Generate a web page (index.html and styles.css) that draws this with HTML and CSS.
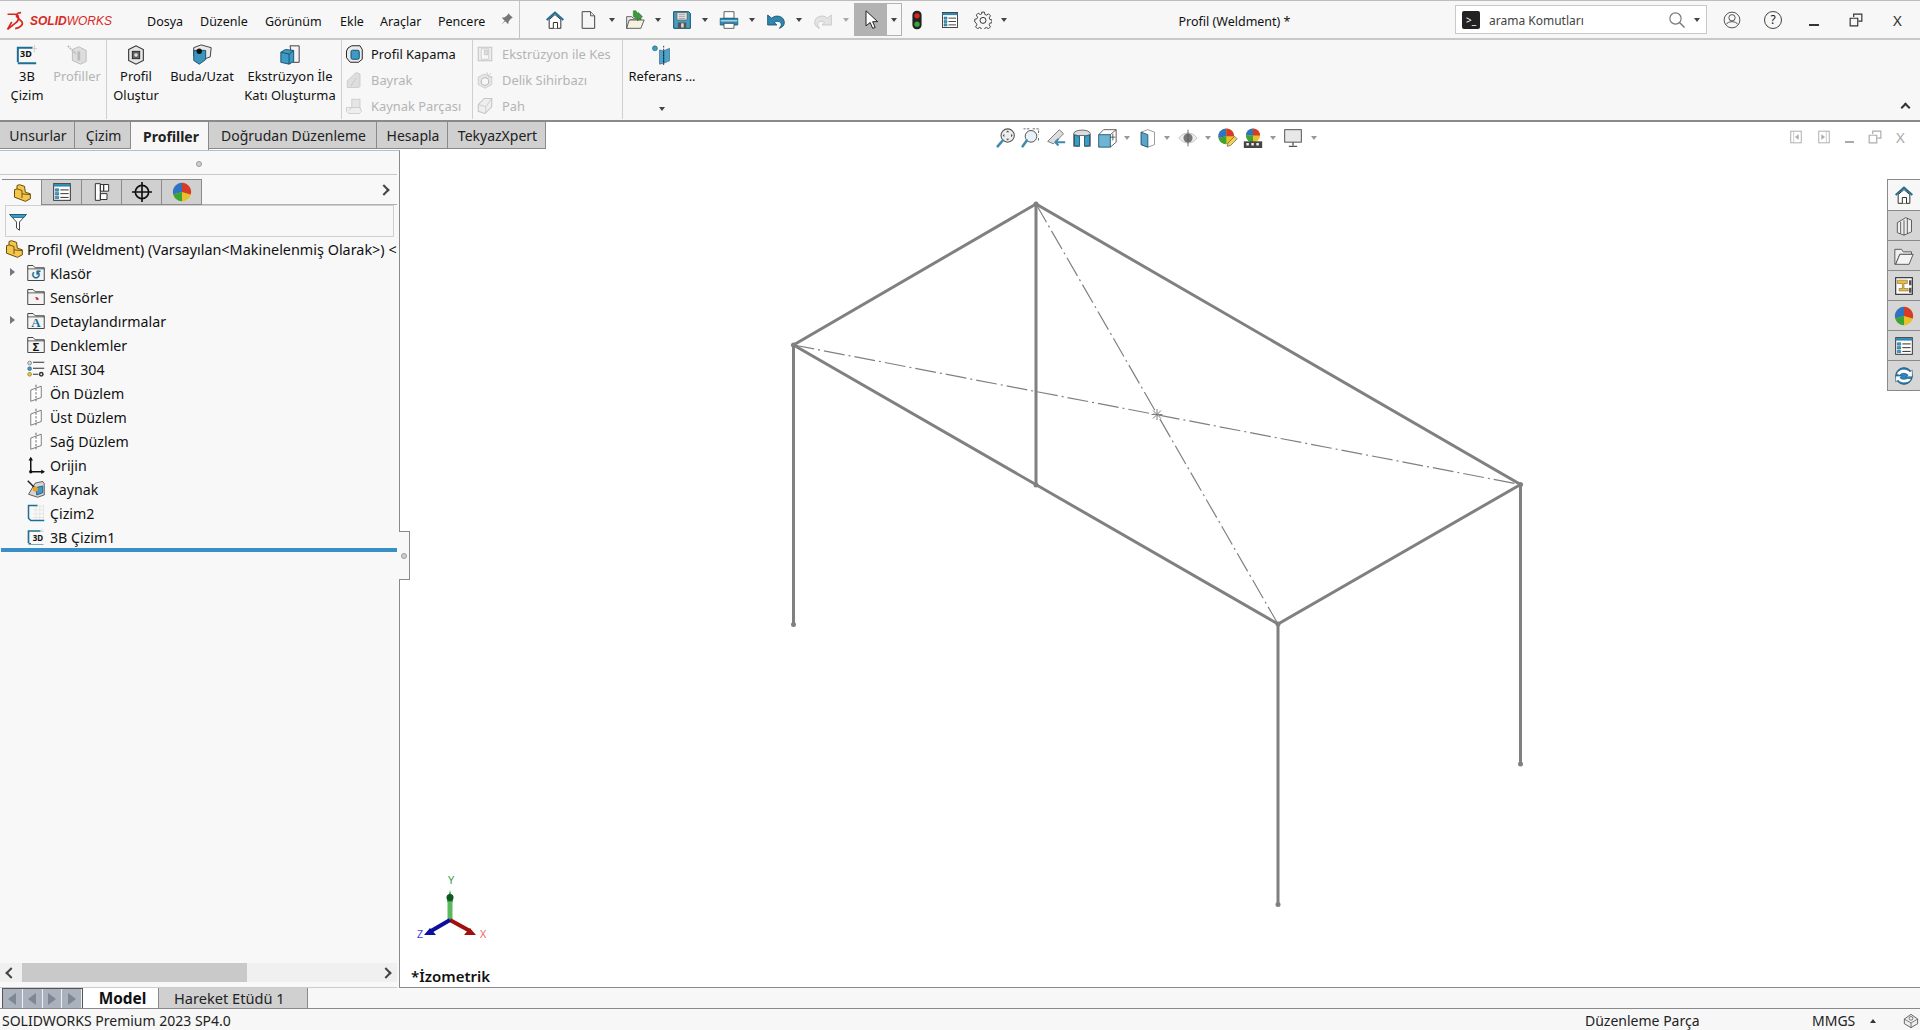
FILE: index.html
```html
<!DOCTYPE html>
<html lang="tr">
<head>
<meta charset="utf-8">
<title>SOLIDWORKS</title>
<link rel="stylesheet" href="styles.css">
</head>
<body>
<svg class="defs" aria-hidden="true">
<defs>
<symbol id="home" viewBox="0 0 24 24"><path d="M2 12 12 3l10 9" fill="none" stroke="#1d6f96" stroke-width="2.4"/><path d="M5 11.5 12 5.500l7 6V22H5z" fill="#fff" stroke="#333" stroke-width="1.200"/><path d="M10 22v-7h5v7" fill="#fff" stroke="#333" stroke-width="1.200"/></symbol>
<symbol id="new" viewBox="0 0 24 24"><path d="M5 2h10l5 5v15H5z" fill="#f5f5f5" stroke="#444" stroke-width="1.200"/><path d="M15 2v5h5" fill="#ddd" stroke="#444"/></symbol>
<symbol id="open" viewBox="0 0 24 24"><path d="M2 8h6l2 2h9v2H6L3 22H2z" fill="#eee" stroke="#444"/><path d="M5 12h18l-4 10H2z" fill="#f7f2e0" stroke="#444"/><path d="M10 1h3l3 4V3l5 5-6 5v-3l-5-2z" fill="#3c9a3c" stroke="#1b6b1b" stroke-width=".6"/></symbol>
<symbol id="save" viewBox="0 0 24 24"><path d="M2 2h18l2 2v18H2z" fill="#4b9bbf" stroke="#12506e" stroke-width="1.200"/><path d="M6 3h12v9H6z" fill="#eee" stroke="#555" stroke-width=".8"/><path d="M8 5h8M8 7.500h8M8 10h8" stroke="#888"/><path d="M7 15h10v7H7z" fill="#555"/><path d="M11 16h3v5h-3z" fill="#ddd"/></symbol>
<symbol id="print" viewBox="0 0 24 24"><path d="M6 2h12v8H6z" fill="#fff" stroke="#444"/><path d="M1.500 10h21v8h-21z" fill="#2e8bb5" stroke="#135a7a"/><path d="M2 13h20" stroke="#bfe2f0" stroke-width="1.500"/><path d="M6 16h12v6H6z" fill="#fff" stroke="#444"/></symbol>
<symbol id="undo" viewBox="0 0 24 24"><path d="M7 10c4-5 15-3 15 5 0 4-3 6-6 7 2-2 3-4 2-6-1-3-6-3-8-1l3 3H2V6z" fill="#2f86b0" stroke="#124f6c" stroke-width="1"/></symbol>
<symbol id="redo" viewBox="0 0 24 24"><path d="M17 10c-4-5-15-3-15 5 0 4 3 6 6 7-2-2-3-4-2-6 1-3 6-3 8-1l-3 3h11V6z" fill="#e4e4e4" stroke="#c4c4c4" stroke-width="1"/></symbol>
<symbol id="cursor" viewBox="0 0 24 24"><path d="M6 1v18l5-4 3 7 3-1-3-7h6z" fill="#fff" stroke="#222" stroke-width="1.200"/></symbol>
<symbol id="traffic" viewBox="0 0 24 24"><rect x="6.500" y="1" width="11" height="22" rx="5" fill="#222"/><circle cx="12" cy="7" r="3.200" fill="#d8261c"/><circle cx="12" cy="17" r="3.200" fill="#3aa535"/></symbol>
<symbol id="list" viewBox="0 0 24 24"><rect x="2" y="2" width="20" height="20" fill="#fff" stroke="#333" stroke-width="1.200"/><path d="M2 2.500h20v3H2z" fill="#2f86b0"/><path d="M4 8h4v3H4zM4 12.500h4v3H4zM4 17h4v3H4z" fill="#3f9ac4" stroke="#135a7a" stroke-width=".6"/><path d="M10 9.500h10M10 14h10M10 18.500h10" stroke="#333" stroke-width="1.200"/></symbol>
<symbol id="gear" viewBox="0 0 24 24"><path d="M10 1h4l.7 3.400 2.300 1 3-1.900 2.800 2.800-1.900 3 1 2.300 3.100.7v4l-3.100.7-1 2.300 1.900 3-2.800 2.800-3-1.900-2.300 1-.7 3.100h-4l-.7-3.100-2.300-1-3 1.900-2.800-2.800 1.900-3-1-2.300L0 15.300v-4l3.100-.7 1-2.300-1.900-3L5 2.500l3 1.900 2.300-1z" fill="none" stroke="#222" stroke-width="1.200" transform="translate(1 .6) scale(.92)"/><circle cx="12" cy="12.500" r="4" fill="none" stroke="#222" stroke-width="1.200"/></symbol>
<symbol id="sk3d" viewBox="0 0 24 24"><path d="M2 20V4h16" fill="none" stroke="#1d6f96" stroke-width="2.200"/><path d="M2 21h20" stroke="#1d6f96" stroke-width="2.200"/><path d="M20 1v8M18 5h5" stroke="#ccc"/></symbol>
<symbol id="member" viewBox="0 0 24 24"><path d="M7 6 14 3l8 4v12l-6 3-9-4z" fill="#ddd" stroke="#bbb"/><path d="M2 2l9 9" stroke="#bbb" stroke-width="2" stroke-dasharray="2 1"/><path d="M14 8v10" stroke="#bbb" stroke-width="3"/></symbol>
<symbol id="profile" viewBox="0 0 24 24"><path d="M4 6l8-4 8 4v12l-8 4-8-4z" fill="#e6e6e6" stroke="#333" stroke-width="1.200"/><rect x="8" y="8" width="8" height="8" fill="#666" stroke="#222"/><circle cx="12" cy="12" r="2" fill="#ddd"/></symbol>
<symbol id="trim" viewBox="0 0 24 24"><path d="M3 4l8-3 11 3-1 10-8 3-10-4z" fill="#e9e9e9" stroke="#333"/><path d="M3 7h13v10l-7 5-6-4z" fill="#3b95bd" stroke="#124f6c"/><circle cx="9" cy="8" r="3" fill="#111"/></symbol>
<symbol id="extrude" viewBox="0 0 24 24"><path d="M12 2h10v18H15z" fill="#f4f4f4" stroke="#333"/><path d="M2 9l5-3 9 1v12l-5 3-9-2z" fill="#3f9ac4" stroke="#124f6c"/><path d="M2 9l9 2v11M11 11l5-4" fill="none" stroke="#124f6c"/></symbol>
<symbol id="cap" viewBox="0 0 24 24"><path d="M4 4l5-3h11l3 5v13l-5 4H7l-5-6V8z" fill="#eaeaea" stroke="#222" stroke-width="1.300"/><rect x="8" y="7" width="11" height="12" rx="2" fill="#3f9ac4" stroke="#124f6c" stroke-width="1.300"/></symbol>
<symbol id="gusset" viewBox="0 0 24 24"><path d="M3 22V13L15 2l5 2v17l-3 1z" fill="#dedede" stroke="#c4c4c4"/><path d="M8 20 15 9" stroke="#c4c4c4"/></symbol>
<symbol id="weldd" viewBox="0 0 24 24"><path d="M9 3h11v15H9z" fill="#e6e6e6" stroke="#c4c4c4"/><path d="M2 14h18l2 5-3 3H5l-3-3z" fill="#eee" stroke="#c4c4c4"/><path d="M9 14 5 18" stroke="#c4c4c4"/></symbol>
<symbol id="cut" viewBox="0 0 24 24"><path d="M3 3h18v18H3z" fill="#eee" stroke="#c4c4c4" stroke-width="1.400"/><path d="M7 5h10v14H7z" fill="#f8f8f8" stroke="#c4c4c4"/><path d="M11 7h5v6h-5z" fill="#ddd" stroke="#c4c4c4"/></symbol>
<symbol id="hole" viewBox="0 0 24 24"><path d="M3 8l8-4 10 4v10l-9 5-9-5z" fill="#e6e6e6" stroke="#c4c4c4"/><circle cx="12" cy="14" r="5" fill="#f7f7f7" stroke="#bbb" stroke-width="1.500"/><path d="M14 1l2 5M20 3l-4 3M22 8h-6" stroke="#c4c4c4"/></symbol>
<symbol id="chamfer" viewBox="0 0 24 24"><path d="M3 10 11 2h10v11l-9 9-9-3z" fill="#eee" stroke="#c4c4c4" stroke-width="1.400"/><path d="M3 10l10 3 8-11M13 13v9" fill="none" stroke="#c4c4c4"/></symbol>
<symbol id="ref" viewBox="0 0 24 24"><circle cx="3.500" cy="4" r="3" fill="#3f9ac4" stroke="#124f6c" stroke-width=".6"/><path d="M9 6l5 1V22l-5 1zM14 7l7-3v15l-7 3z" fill="#4fa3c9" stroke="#124f6c" stroke-width=".6"/><path d="M14 1v23" stroke="#111" stroke-dasharray="2 1.500"/></symbol>
<symbol id="part" viewBox="0 0 24 24"><path d="M9 2l6 2 1 7 6 2v6l-6 3-13-5V8l3-1V3z" fill="#f4c64a" stroke="#6a4b10" stroke-width="1.200"/><path d="M6 7l6 2v4l10 1M12 13v5" fill="none" stroke="#6a4b10" stroke-width="1.100"/></symbol>
<symbol id="folder" viewBox="0 0 24 24"><path d="M1 22V2h7l3 3h12v17z" fill="#f4f4f4" stroke="#333" stroke-width="1.200"/><path d="M1 6.500h22" stroke="#333"/></symbol>
<symbol id="plane" viewBox="0 0 24 24"><path d="M5 8l14-5v15L5 23z" fill="#fff" stroke="#555"/><path d="M12 1v22" stroke="#555" stroke-width="1.200" stroke-dasharray="3 2"/></symbol>
<symbol id="origin" viewBox="0 0 24 24"><path d="M5 21V3M5 21h17" fill="none" stroke="#111" stroke-width="2"/><path d="M2 6l3-5 3 5zM19 18l5 3-5 3z" fill="#111"/><circle cx="5" cy="21" r="2.200" fill="#111"/></symbol>
<symbol id="mat" viewBox="0 0 24 24"><circle cx="3.500" cy="4" r="2.500" fill="#ddd" stroke="#555" stroke-width=".8"/><circle cx="3.500" cy="11.500" r="2.500" fill="#3f9ac4" stroke="#135a7a" stroke-width=".8"/><circle cx="3.500" cy="19" r="2.500" fill="#f0c93a" stroke="#7b6212" stroke-width=".8"/><path d="M8 3h15M8 11h15M8 19h7" stroke="#333" stroke-width="1.600"/><circle cx="19" cy="19" r="3.200" fill="#333"/><circle cx="19" cy="19" r="1.200" fill="#fff"/></symbol>
<symbol id="weldi" viewBox="0 0 24 24"><path d="M11 4l10-2 2 3v15l-9 3-12-4z" fill="#d6d6d6" stroke="#333"/><path d="M12 10l9-2v9l-8 3z" fill="#3f9ac4" stroke="#124f6c"/><path d="M1 1l11 11" stroke="#222" stroke-width="2"/><circle cx="11" cy="12" r="3.500" fill="#f0a020"/></symbol>
<symbol id="sketch" viewBox="0 0 24 24"><path d="M8 3h15M8 8h15M8 13h15M8 18h15M12 1v20M17 1v20M22 1v20" stroke="#e2e2e2"/><path d="M14 2H2v17l3 3h18" fill="none" stroke="#1d6f96" stroke-width="2"/></symbol>
<symbol id="funnel" viewBox="0 0 24 24"><path d="M1 2h22l-9 10v11l-4-3v-8z" fill="#fff" stroke="#333" stroke-width="1.200"/><path d="M1 2h22l-3 4H4z" fill="#3f9ac4" stroke="#135a7a"/></symbol>
<symbol id="ball" viewBox="0 0 24 24"><circle cx="12" cy="12" r="11" fill="#e6c12a"/><path d="M12 12V1A11 11 0 0 0 1.500 15z" fill="#2f73c4"/><path d="M12 12V1a11 11 0 0 1 10.500 14z" fill="#d63a2a"/><path d="M12 12 1.500 15A11 11 0 0 0 12 23z" fill="#3aa535"/></symbol>
<symbol id="tree2" viewBox="0 0 24 24"><path d="M4 2h6v20H4zM10 3h4v8h-4zM10 14h8v7h-8zM14 3h6v8h-6z" fill="#fff" stroke="#333" stroke-width="1.200"/></symbol>
<symbol id="target" viewBox="0 0 24 24"><circle cx="12" cy="12" r="8" fill="none" stroke="#111" stroke-width="2"/><path d="M12 0v24M0 12h24" stroke="#111" stroke-width="2"/></symbol>
<symbol id="zoomfit" viewBox="0 0 24 24"><circle cx="14" cy="9" r="8" fill="#eee" stroke="#555" stroke-width="1.300"/><path d="M8 15 2 22" stroke="#3f88ae" stroke-width="3" stroke-linecap="round"/><path d="M14 3l2 2h-4zM14 15l2-2h-4zM8 9l2-2v4zM20 9l-2-2v4z" fill="#555"/></symbol>
<symbol id="zoomarea" viewBox="0 0 24 24"><circle cx="12" cy="10" r="7" fill="#e8f1f5" stroke="#555" stroke-width="1.200"/><path d="M7 15 2 22" stroke="#3f88ae" stroke-width="3" stroke-linecap="round"/><path d="M10 1H3M14 1h7v7M21 12v3" fill="none" stroke="#555" stroke-dasharray="3 1.500"/></symbol>
<symbol id="prevview" viewBox="0 0 24 24"><path d="M2 16 16 2l5 5-12 12z" fill="#ddd" stroke="#666"/><path d="M11 17h12M11 17l4-4M11 17l4 4" fill="none" stroke="#3f88ae" stroke-width="2.400"/></symbol>
<symbol id="section" viewBox="0 0 24 24"><path d="M2 7c0-6 20-6 20 0v15h-6V9H8v13H2z" fill="#ddd" stroke="#555"/><path d="M3 8l6 2v12l-6-1zM15 10l6-2v13l-6 1z" fill="#3f9ac4" stroke="#124f6c"/></symbol>
<symbol id="orient" viewBox="0 0 24 24"><path d="M2 8h14v15H2z" fill="#6fb4d3" stroke="#124f6c"/><path d="M2 8l6-6h15v15l-7 6M16 8l7-6" fill="none" stroke="#444"/><path d="M19 7v8M16 11h6" stroke="#444"/></symbol>
<symbol id="display" viewBox="0 0 24 24"><path d="M5 5l8-3 8 3v15l-8 3-8-3z" fill="#fff" stroke="#888"/><path d="M5 5l8 3v15l-8-3z" fill="#5aa6c8" stroke="#124f6c"/></symbol>
<symbol id="eye" viewBox="0 0 24 24"><path d="M1 12c6-8 16-8 22 0-6 8-16 8-22 0z" fill="#eee" stroke="#bbb"/><circle cx="12" cy="12" r="5.500" fill="#777"/><path d="M12 2v20" stroke="#555"/></symbol>
<symbol id="appear" viewBox="0 0 24 24"><circle cx="10" cy="10" r="9.500" fill="#e6c12a"/><path d="M10 10V.5A9.500 9.500 0 0 0 .6 12z" fill="#2f73c4"/><path d="M10 10V.5A9.500 9.500 0 0 1 19.500 10z" fill="#d63a2a"/><path d="M10 10 .6 12A9.500 9.500 0 0 0 10 19.500z" fill="#3aa535"/><path d="M11 22l1-4 8-8 3 3-8 8z" fill="#f3d255" stroke="#555" stroke-width=".8"/></symbol>
<symbol id="scene" viewBox="0 0 24 24"><circle cx="12" cy="9" r="8.500" fill="#e6c12a"/><path d="M12 9V.5A8.500 8.500 0 0 0 3.500 9z" fill="#2f73c4"/><path d="M12 9V.5A8.500 8.500 0 0 1 20.500 9z" fill="#d63a2a"/><path d="M3.500 9A8.500 8.500 0 0 0 12 17.500V9z" fill="#3aa535"/><path d="M1 16h22v8H1z" fill="#444"/><path d="M4 18h3v3H4zM10 18h3v3h-3zM16 18h3v3h-3z" fill="#eee"/></symbol>
<symbol id="monitor" viewBox="0 0 24 24"><rect x="2" y="2" width="20" height="15" fill="#e8e8e8" stroke="#555" stroke-width="1.200"/><path d="M12 17v4M7 22h10" stroke="#555" stroke-width="1.600"/></symbol>
<symbol id="book" viewBox="0 0 24 24"><path d="M4 8l10-6 7 3v14l-9 4-8-3z" fill="#eee" stroke="#444"/><path d="M8 7v14M12 5v18M16 3v18" stroke="#444"/></symbol>
<symbol id="pfolder" viewBox="0 0 24 24"><path d="M1 22V4h8l2 3h10v3H7L2 22z" fill="#eee" stroke="#444"/><path d="M7 10h16l-5 12H2z" fill="#f4f4f4" stroke="#444"/></symbol>
<symbol id="views" viewBox="0 0 24 24"><rect x="2" y="2" width="20" height="20" fill="#fff" stroke="#333" stroke-width="1.400"/><path d="M4 5h12v4h-4v6h5v3H6v-3h4V9H4z" fill="#f2be2a" stroke="#555" stroke-width=".6"/><path d="M18 5h3v6h-3zM18 14h3v6h-3z" fill="#555"/></symbol>
<symbol id="sync" viewBox="0 0 24 24"><circle cx="12" cy="12" r="10" fill="#2f86c8" stroke="#124f6c"/><path d="M3 10c2-7 12-8 16-3l3-2v8h-8l3-2c-3-3-8-3-10 0z" fill="#fff" stroke="#124f6c" stroke-width=".7"/><path d="M21 15c-2 6-12 7-16 2l-3 2v-7h8l-3 2c3 3 7 2 9 1z" fill="#fff" stroke="#124f6c" stroke-width=".7"/></symbol>
<symbol id="keyb" viewBox="0 0 24 24"><path d="M2 9l10-7 10 7v7l-10 6-10-6z" fill="#eee" stroke="#444" stroke-width="1.200"/><path d="M2 9l10 6 10-6M12 15v7" fill="none" stroke="#444"/><circle cx="12" cy="8" r="2.800" fill="none" stroke="#444"/></symbol>
<symbol id="pin" viewBox="0 0 24 24"><path d="M14 2l8 8-3 1-4 5-1 5-5-5-7 6 6-7-5-5 5-1 5-4z" fill="#777"/></symbol>
<symbol id="user" viewBox="0 0 24 24"><circle cx="12" cy="12" r="10.500" fill="none" stroke="#444" stroke-width="1.200"/><circle cx="12" cy="9" r="4.200" fill="none" stroke="#444" stroke-width="1.200"/><path d="M4 18c3-5 13-5 16 0" fill="none" stroke="#444" stroke-width="1.200"/></symbol>
<symbol id="searchi" viewBox="0 0 24 24"><circle cx="10" cy="10" r="7.500" fill="none" stroke="#777" stroke-width="1.500"/><path d="M15 15l7 7" stroke="#777" stroke-width="1.800"/></symbol>
<symbol id="restore" viewBox="0 0 24 24"><path d="M8 7V2h14v12h-6" fill="none" stroke="#333" stroke-width="2"/><path d="M2 9h13v13H2z" fill="none" stroke="#333" stroke-width="2"/></symbol>
<symbol id="paneleft" viewBox="0 0 24 24"><rect x="3" y="2" width="18" height="20" fill="none" stroke="#aaa" stroke-width="1.600"/><path d="M8 2v20M16 8l-5 4 5 4z" stroke="#aaa" fill="#aaa"/></symbol>
<symbol id="paneright" viewBox="0 0 24 24"><rect x="3" y="2" width="18" height="20" fill="none" stroke="#aaa" stroke-width="1.600"/><path d="M16 2v20M8 8l5 4-5 4z" stroke="#aaa" fill="#aaa"/></symbol>
</defs>
</svg>

<header class="topbar">
  <div class="logo">
    <svg class="logo-mark" viewBox="0 0 26 22"><path d="M3 3h9c5 0 5 7 1 10L3 21l5-9M19 1c-5 0-7 3-4 6l5 5c2 3-2 7-8 8" fill="none" stroke="#d8281e" stroke-width="2"/></svg>
    <span class="logo-text"><b>SOLID</b>WORKS</span>
  </div>
  <nav class="menu">
    <span class="m1">Dosya</span><span class="m2">Düzenle</span><span class="m3">Görünüm</span><span class="m4">Ekle</span><span class="m5">Araçlar</span><span class="m6">Pencere</span>
    <svg class="pin"><use href="#pin"/></svg>
  </nav>
  <div class="quick">
    <span class="qt qt-home"><svg class="i20"><use href="#home"/></svg></span>
    <span class="qt qt-new"><svg class="i20"><use href="#new"/></svg></span><i class="dd"></i>
    <span class="qt qt-n"><svg class="i20"><use href="#open"/></svg></span><i class="dd"></i>
    <span class="qt"><svg class="i20"><use href="#save"/></svg></span><i class="dd"></i>
    <span class="qt"><svg class="i20"><use href="#print"/></svg></span><i class="dd"></i>
    <span class="qt"><svg class="i20"><use href="#undo"/></svg></span><i class="dd"></i>
    <span class="qt"><svg class="i20"><use href="#redo"/></svg></span><i class="dd dim"></i>
    <span class="select"><span class="select-main"><svg class="i20"><use href="#cursor"/></svg></span><span class="select-dd"><i class="dd"></i></span></span>
    <span class="qt qt-t qt-light"><svg class="i20"><use href="#traffic"/></svg></span>
    <span class="qt qt-t"><svg class="i18"><use href="#list"/></svg></span>
    <span class="qt qt-t"><svg class="i18"><use href="#gear"/></svg></span><i class="dd"></i>
  </div>
  <div class="doc-title">Profil (Weldment) *</div>
  <div class="search">
    <span class="search-term">&gt;_</span>
    <span class="search-text">arama Komutları</span>
    <svg class="i18 search-icon"><use href="#searchi"/></svg><i class="dd"></i>
  </div>
  <div class="win">
    <svg class="i18"><use href="#user"/></svg>
    <span class="help">?</span>
    <span class="win-min"></span>
    <svg class="i14"><use href="#restore"/></svg>
    <span class="win-x">X</span>
  </div>
</header>

<section class="ribbon">
  <div class="rgroup g1">
    <div class="rbtn w54"><svg class="i22"><use href="#sk3d"/></svg><span class="threed">3D</span><span>3B<br>Çizim</span></div>
    <div class="rbtn w46 off"><svg class="i22"><use href="#member"/></svg><span>Profiller</span></div>
  </div>
  <div class="rgroup g2">
    <div class="rbtn w58"><svg class="i22"><use href="#profile"/></svg><span>Profil<br>Oluştur</span></div>
    <div class="rbtn w74"><svg class="i22"><use href="#trim"/></svg><span>Buda/Uzat</span></div>
    <div class="rbtn w103"><svg class="i22"><use href="#extrude"/></svg><span>Ekstrüzyon İle<br>Katı Oluşturma</span></div>
  </div>
  <div class="rgroup g3 rcol">
    <div class="rrow"><svg class="i18"><use href="#cap"/></svg><span>Profil Kapama</span></div>
    <div class="rrow off"><svg class="i18"><use href="#gusset"/></svg><span>Bayrak</span></div>
    <div class="rrow off"><svg class="i18"><use href="#weldd"/></svg><span>Kaynak Parçası</span></div>
  </div>
  <div class="rgroup g4 rcol">
    <div class="rrow off"><svg class="i18"><use href="#cut"/></svg><span>Ekstrüzyon ile Kes</span></div>
    <div class="rrow off"><svg class="i18"><use href="#hole"/></svg><span>Delik Sihirbazı</span></div>
    <div class="rrow off"><svg class="i18"><use href="#chamfer"/></svg><span>Pah</span></div>
  </div>
  <div class="rgroup g5">
    <div class="rbtn w78"><svg class="i20"><use href="#ref"/></svg><span class="ref-label">Referans ...</span><i class="dd ref-dd"></i></div>
  </div>
  <div class="ribbon-end"><span class="caret"></span></div>
</section>

<div class="tabrow">
  <div class="tabs">
    <span class="tab t1">Unsurlar</span><span class="tab t2">Çizim</span><span class="tab t3 on">Profiller</span><span class="tab t4">Doğrudan Düzenleme</span><span class="tab t5">Hesapla</span><span class="tab t6">TekyazXpert</span>
  </div>
  <div class="vtools">
    <svg class="i20"><use href="#zoomfit"/></svg>
    <svg class="i20"><use href="#zoomarea"/></svg>
    <svg class="i20"><use href="#prevview"/></svg>
    <svg class="i20"><use href="#section"/></svg>
    <svg class="i20"><use href="#orient"/></svg><i class="dd sm"></i>
    <svg class="i20"><use href="#display"/></svg><i class="dd sm"></i>
    <svg class="i20"><use href="#eye"/></svg><i class="dd sm"></i>
    <svg class="i20"><use href="#appear"/></svg>
    <svg class="i20"><use href="#scene"/></svg><i class="dd sm"></i>
    <svg class="i20"><use href="#monitor"/></svg><i class="dd sm"></i>
  </div>
  <div class="docwin">
    <svg class="i14"><use href="#paneleft"/></svg>
    <svg class="i14"><use href="#paneright"/></svg>
    <span class="doc-min"></span>
    <svg class="i14 gray"><use href="#restore"/></svg>
    <span class="doc-x">X</span>
  </div>
</div>

<main class="work">
  <aside class="side">
    <div class="side-head"><span class="dot"></span></div>
    <div class="mgr">
      <span class="mtab active"><svg class="i20"><use href="#part"/></svg></span>
      <span class="mtab"><svg class="i20"><use href="#list"/></svg></span>
      <span class="mtab"><svg class="i20"><use href="#tree2"/></svg></span>
      <span class="mtab"><svg class="i20"><use href="#target"/></svg></span>
      <span class="mtab"><svg class="i20"><use href="#ball"/></svg></span>
      <span class="mgr-rest"><span class="chev right"></span></span>
    </div>
    <div class="filter"><svg class="i18"><use href="#funnel"/></svg></div>
    <div class="tree">
      <div class="root"><svg class="i20"><use href="#part"/></svg><span>Profil (Weldment) (Varsayılan&lt;Makinelenmiş Olarak&gt;) &lt;</span></div>
      <div class="node"><i class="tw"></i><svg class="i18"><use href="#folder"/></svg><b class="badge hist">↺</b><span>Klasör</span></div>
      <div class="node"><i class="tw none"></i><svg class="i18"><use href="#folder"/></svg><b class="badge sens">◔</b><span>Sensörler</span></div>
      <div class="node"><i class="tw"></i><svg class="i18"><use href="#folder"/></svg><b class="badge ann">A</b><span>Detaylandırmalar</span></div>
      <div class="node"><i class="tw none"></i><svg class="i18"><use href="#folder"/></svg><b class="badge eq">Σ</b><span>Denklemler</span></div>
      <div class="node"><i class="tw none"></i><svg class="i18"><use href="#mat"/></svg><span>AISI 304</span></div>
      <div class="node"><i class="tw none"></i><svg class="i18"><use href="#plane"/></svg><span>Ön Düzlem</span></div>
      <div class="node"><i class="tw none"></i><svg class="i18"><use href="#plane"/></svg><span>Üst Düzlem</span></div>
      <div class="node"><i class="tw none"></i><svg class="i18"><use href="#plane"/></svg><span>Sağ Düzlem</span></div>
      <div class="node"><i class="tw none"></i><svg class="i18"><use href="#origin"/></svg><span>Orijin</span></div>
      <div class="node"><i class="tw none"></i><svg class="i18"><use href="#weldi"/></svg><span>Kaynak</span></div>
      <div class="node"><i class="tw none"></i><svg class="i18"><use href="#sketch"/></svg><span>Çizim2</span></div>
      <div class="node"><i class="tw none"></i><svg class="i18"><use href="#sk3d"/></svg><b class="badge sk">3D</b><span>3B Çizim1</span></div>
      <div class="rollback"></div>
    </div>
    <div class="hscroll"><span class="chev left"></span><span class="thumb"></span><span class="chev right"></span></div>
    <div class="side-foot"></div>
    <div class="handle"><span class="dot"></span></div>
  </aside>
  <section class="view">
    <svg class="scene" viewBox="400 150 1520 838">
      <g class="frame">
        <path d="M1036 204 793.500 345 1278 624 1520.500 484.500Z"/>
        <path d="M1036 204V485M793.500 345V624.500M1520.500 484.500V764M1278 624V904.500"/>
      </g>
      <g class="nodes">
        <circle cx="1036" cy="204" r="2.500"/><circle cx="793.500" cy="345" r="2.500"/><circle cx="1278" cy="624" r="2.500"/><circle cx="1520.500" cy="484.500" r="2.500"/><circle cx="1036" cy="485" r="2.500"/><circle cx="793.500" cy="624.500" r="2.500"/><circle cx="1520.500" cy="764" r="2.500"/><circle cx="1278" cy="904.500" r="2.500"/>
      </g>
      <g class="center">
        <path d="M793.500 345 1520.500 484.500M1036 204 1278 624"/>
      </g>
      <path class="star" d="M1157 409v11M1151.500 414.500h11M1153 410.500l8 8M1161 410.500l-8 8"/>
      <g class="triad">
        <path class="ty" d="M450 920V895"/><path class="tyh" d="M450 890l-3 12h6z"/><circle cx="450" cy="897.500" r="3.500" fill="#0b5a1e"/>
        <path class="tx" d="M450 920 470 931"/><path class="txh" d="M476 935l-12 0 6-7z"/>
        <path class="tz" d="M450 920 431 931"/><path class="tzh" d="M424 935l12 0-6-7z"/>
        <text x="451" y="884" class="ly">Y</text><text x="483" y="938" class="lx">X</text><text x="420" y="938" class="lz">Z</text>
      </g>
    </svg>
    <div class="viewname">*İzometrik</div>
    <div class="pane">
      <span class="pt first"><svg class="i20"><use href="#home"/></svg></span>
      <span class="pt"><svg class="i20"><use href="#book"/></svg></span>
      <span class="pt"><svg class="i20"><use href="#pfolder"/></svg></span>
      <span class="pt"><svg class="i20"><use href="#views"/></svg></span>
      <span class="pt"><svg class="i20"><use href="#ball"/></svg></span>
      <span class="pt"><svg class="i20"><use href="#list"/></svg></span>
      <span class="pt"><svg class="i20"><use href="#sync"/></svg></span>
    </div>
  </section>
</main>

<div class="bottomtabs">
  <div class="navs"><i class="nav first"></i><i class="nav prev"></i><i class="nav next"></i><i class="nav last"></i></div>
  <span class="btab on">Model</span><span class="btab">Hareket Etüdü 1</span>
</div>

<footer class="status">
  <span class="st-ver">SOLIDWORKS Premium 2023 SP4.0</span>
  <span class="st-mode">Düzenleme Parça</span>
  <span class="st-unit">MMGS</span>
  <span class="st-up"></span>
  <svg class="i16"><use href="#keyb"/></svg>
</footer>
</body>
</html>
```

FILE: styles.css
```css
* { box-sizing: border-box; }
html, body { margin: 0; padding: 0; width: 1920px; height: 1030px; overflow: hidden; }
body { font-family: "Noto Sans", "Liberation Sans", sans-serif; font-size: 12.500px; color: #111; background: #f7f7f7; display: flex; flex-direction: column; }
.defs { position: absolute; width: 0; height: 0; }
svg { display: block; flex: none; }
i { display: block; font-style: normal; }
.i14 { width: 14px; height: 14px; }
.i16 { width: 16px; height: 16px; }
.i18 { width: 18px; height: 18px; }
.i20 { width: 20px; height: 20px; }
.i22 { width: 22px; height: 22px; }

.dd { width: 0; height: 0; border: 3px solid transparent; border-top: 4px solid #444; border-bottom: 0; flex: none; }
.dd.dim { border-top-color: #aaa; }
.dd.sm { border-top-color: #999; }

.topbar { height: 40px; flex: none; display: flex; align-items: center; border-top: 1px solid #bdbdbd; border-bottom: 2px solid #c8c8c8; background: #f7f7f7; }
.logo { width: 147px; flex: none; display: flex; align-items: center; padding: 2px 0 0 5px; color: #d8281e; }
.logo-mark { width: 22px; height: 20px; margin-right: 3px; }
.logo-text { font: italic 12px "Liberation Sans", sans-serif; }
.logo-text b { font-weight: 700; }
.menu { display: flex; align-items: center; width: 373px; flex: none; height: 37px; padding-top: 4px; border-right: 1px solid #c4c4c4; }
.m1 { width: 53px; } .m2 { width: 65px; } .m3 { width: 75px; } .m4 { width: 40px; } .m5 { width: 58px; } .m6 { width: 62px; }
.pin { width: 14px; height: 14px; margin-top: -5px; }
.quick { display: flex; align-items: center; width: 490px; flex: none; padding-left: 25px; }
.qt { width: 36px; height: 32px; display: flex; align-items: center; justify-content: center; flex: none; }
.qt-home { width: 20px; margin-right: 13px; }
.qt-new { width: 20px; margin-right: 9px; }
.quick .dd { margin: 0 3px 0 2px; }
.qt-n { margin-left: -1px; }
.select { display: flex; width: 48px; height: 33px; margin-left: 2px; flex: none; border: 1px solid #b2b2b2; }
.select .dd { margin: 0; }
.select-main { width: 32px; background: #b2b2b2; display: flex; align-items: center; justify-content: center; }
.select-dd { flex: 1; display: flex; align-items: center; justify-content: center; background: #f7f7f7; }
.qt-t { width: 33px; }
.qt-light { margin-left: -2px; }
.doc-title { width: 448px; flex: none; text-align: center; padding: 4px 0 0 1px; }
.search { width: 252px; height: 29px; flex: none; margin-left: -3px; display: flex; align-items: center; background: #fff; border: 1px solid #c8c8c8; padding: 0 6px; }
.search-term { width: 18px; height: 18px; background: #222; color: #fff; border-radius: 2px; font-size: 10px; line-height: 18px; text-align: center; flex: none; }
.search-text { color: #444; font-size: 12px; margin-left: 9px; padding-top: 2px; flex: 1; }
.search-icon { margin-right: 8px; }
.win { display: flex; align-items: center; flex: 1; padding-left: 16px; }
.win svg:first-child { margin-right: 23px; }
.help { width: 18px; height: 18px; border: 1.500px solid #444; border-radius: 50%; text-align: center; line-height: 15px; font-size: 12px; margin-right: 27px; flex: none; }
.win-min { width: 10px; height: 2px; background: #333; margin-top: 11px; margin-right: 30px; flex: none; }
.win-x { margin-left: 30px; font-size: 15px; color: #333; }

.ribbon { height: 82px; flex: none; display: flex; background: #f7f7f7; border-bottom: 2px solid #8a8a8a; font-size: 12.900px; }
.rgroup { display: flex; flex: none; margin-bottom: 1px; border-right: 1px solid #cfcfcf; }
.g1 { width: 107px; } .g2 { width: 235px; } .g3 { width: 131px; } .g4 { width: 150px; } .g5 { width: 85px; border-right: 0; }
.rcol { flex-direction: column; padding: 1px 0 0 3px; }
.rbtn { position: relative; display: flex; flex-direction: column; align-items: center; padding-top: 4px; text-align: center; line-height: 19px; flex: none; }
.rbtn svg { margin-bottom: 1px; }
.rbtn .i20 { margin: 1px 0 2px; }
.w54 { width: 54px; } .w46 { width: 46px; } .w58 { width: 58px; } .w74 { width: 74px; } .w103 { width: 102px; } .w78 { width: 78px; }
.threed { position: absolute; top: 8px; left: 20px; font-size: 9px; line-height: 12px; font-weight: 700; }
.off { color: #b4b4b4; }
.rrow { height: 26px; display: flex; align-items: center; gap: 8px; flex: none; }
.ref-label { white-space: nowrap; }
.ref-dd { margin-top: 21px; }
.ribbon-end { flex: 1; display: flex; justify-content: flex-end; align-items: flex-end; padding: 0 11px 9px 0; }
.caret { width: 7px; height: 7px; border-left: 2px solid #333; border-top: 2px solid #333; transform: rotate(45deg); }

.tabrow { height: 28px; flex: none; display: flex; background: #fff; }
.tabs { display: flex; width: 546px; flex: none; }
.tab { height: 27px; display: flex; align-items: center; justify-content: center; flex: none; padding-left: 2px; background: #d0d0d0; border-right: 1px solid #8a8a8a; border-bottom: 1px solid #8a8a8a; color: #222; font-size: 14px; }
.tab.on { background: #f7f7f7; font-weight: 700; border-bottom: 0; height: 28px; padding-left: 3px; }
.t1 { width: 75px; } .t2 { width: 56px; } .t3 { width: 78px; } .t4 { width: 168px; } .t5 { width: 71px; } .t6 { width: 98px; }
.vtools { display: flex; align-items: center; padding: 3px 0 0 450px; gap: 5.200px; flex: none; width: 1225px; }
.vtools .dd.sm { margin: 0 2px; }
.docwin { display: flex; align-items: center; padding: 2px 0 0 18px; gap: 14px; }
.gray { opacity: .4; }
.doc-min { width: 9px; height: 2px; background: #aaa; margin-top: 9px; }
.doc-x { color: #aaa; font-size: 15px; }

.work { height: 838px; flex: none; display: flex; }
.side { width: 400px; flex: none; position: relative; z-index: 2; display: flex; flex-direction: column; background: #f8f8f8; border-right: 1px solid #8a8a8a; border-top: 1px solid #a9c6cc; }
.side-head { height: 24px; flex: none; margin-right: 2px; display: flex; justify-content: center; align-items: center; padding-top: 3px; border-bottom: 1px solid #c8c8c8; }
.dot { width: 6px; height: 6px; border-radius: 50%; background: #d0d0d0; border: 1px solid #999; display: block; }
.mgr { height: 30px; flex: none; display: flex; align-items: flex-end; padding-left: 2px; }
.mtab { width: 40px; height: 26px; flex: none; background: #d0d0d0; border: 1px solid #8a8a8a; border-left: 0; display: flex; align-items: center; justify-content: center; }
.mtab.active { background: #f8f8f8; border-width: 1px 1px 0 0; border-color: #8a8a8a; }
.mgr-rest { flex: 1; height: 26px; border-bottom: 1px solid #b0b0b0; margin-right: 2px; display: flex; justify-content: flex-end; align-items: center; padding: 0 9px 4px 0; }
.chev { width: 8px; height: 8px; border-top: 2px solid #444; border-right: 2px solid #444; display: block; flex: none; }
.chev.right { transform: rotate(45deg); }
.chev.left { transform: rotate(-135deg); }
.filter { height: 32px; flex: none; margin: 0 5px; background: #f8f8f8; border: 1px solid #cfcfcf; display: flex; align-items: center; padding: 2px 0 0 3px; }
.tree { flex: 1; min-height: 0; white-space: nowrap; overflow: hidden; margin-right: 2px; }
.root { height: 24px; display: flex; align-items: center; gap: 3px; padding-left: 4px; font-size: 14.400px; }
.node { height: 24px; display: flex; align-items: center; position: relative; font-size: 14.200px; }
.tw { width: 0; height: 0; margin: 0 0 2px 10px; border: 4px solid transparent; border-left: 5px solid #777; border-right: 0; }
.tw.none { visibility: hidden; }
.node svg { margin-left: 12px; margin-right: 5px; }
.badge { position: absolute; font-style: normal; line-height: 12px; width: 14px; text-align: center; left: 29px; top: 8px; font-size: 10px; }
.hist { color: #1d6f96; font-size: 12px; }
.sens { color: #c23; font-size: 12px; }
.ann { color: #1d6f96; font-family: "Liberation Serif", serif; font-size: 13px; }
.eq { font-size: 11px; }
.sk { font-size: 8px; top: 7px; left: 31px; background: #f8f8f8; }
.rollback { height: 4px; margin: -1px 0 0 1px; background: #3a8fc7; }
.hscroll { height: 19px; flex: none; display: flex; align-items: center; background: #f0f0f0; margin-right: 2px; padding: 0 7px; }
.thumb { width: 225px; height: 19px; margin-left: 7px; background: #c9c9c9; flex: none; }
.hscroll .chev.right { margin-left: auto; }
.side-foot { height: 6px; flex: none; margin-right: 2px; border-bottom: 1px solid #ccc; }
.handle { position: absolute; left: 399px; top: 380px; width: 11px; height: 49px; background: #f8f8f8; border: 1px solid #8a8a8a; border-left: 0; display: flex; align-items: center; justify-content: center; }

.view { flex: 1; position: relative; background: #fff; border-bottom: 1px solid #8a8a8a; }
.scene { position: absolute; inset: 0; width: 1520px; height: 838px; }
.frame { fill: none; stroke: #808080; stroke-width: 3; }
.nodes { fill: #808080; }
.center { fill: none; stroke: #808080; stroke-width: 1.200; stroke-dasharray: 21 4 2 4; }
.star { stroke: #808080; fill: none; }
.ty { stroke: #5cb85c; stroke-width: 5; }
.tyh { fill: #3d9c4a; }
.tx { stroke: #a01010; stroke-width: 4; }
.txh { fill: #a01010; }
.tz { stroke: #0e0e9c; stroke-width: 4; }
.tzh { fill: #0e0e9c; }
.triad text { font: 10px "Liberation Sans", sans-serif; text-anchor: middle; }
.ly { fill: #2a9a3a; }
.lx { fill: #f06060; }
.lz { fill: #4040e0; }
.viewname { position: absolute; left: 11px; bottom: 0; font-size: 15px; font-weight: 600; color: #111; line-height: 22px; }
.pane { position: absolute; right: 0; top: 29px; width: 33px; display: flex; flex-direction: column; border-left: 1px solid #8a8a8a; border-bottom: 1px solid #8a8a8a; border-top: 1px solid #8a8a8a; }
.pt { height: 30px; display: flex; align-items: center; justify-content: center; background: #d6d6d6; border-top: 1px solid #8a8a8a; }
.pt.first { background: #f7f7f7; border-top: 0; }

.bottomtabs { height: 21px; flex: none; display: flex; background: #f7f7f7; padding-left: 2px; border-bottom: 1px solid #8a8a8a; }
.navs { width: 81px; flex: none; display: flex; background: #aab2bd; border: 1px solid #555; border-bottom: 0; }
.nav { flex: 1; border-right: 1px solid #f0f0f0; display: flex; align-items: center; justify-content: center; }
.nav::before { content: ""; display: block; width: 0; height: 0; border: 6px solid transparent; }
.prev::before, .first::before { border-right: 8px solid #7f8792; border-left: 0; }
.next::before, .last::before { border-left: 8px solid #7f8792; border-right: 0; }
.btab { height: 20px; display: flex; align-items: center; justify-content: center; flex: none; width: 76px; padding-left: 4px; font-size: 15.400px; font-weight: 700; background: #fff; border-right: 1px solid #8a8a8a; }
.btab + .btab { width: 149px; justify-content: flex-start; padding-left: 15px; font-size: 14.600px; background: #d0d0d0; font-weight: 400; color: #222; }
.status { height: 21px; flex: none; display: flex; align-items: center; background: #f7f7f7; padding: 2px 0 0 2px; font-size: 14px; color: #222; }
.st-ver { width: 1583px; flex: none; }
.st-mode { width: 227px; flex: none; }
.st-unit { width: 58px; flex: none; }
.st-up { width: 0; height: 0; border: 3px solid transparent; border-bottom: 4px solid #333; border-top: 0; margin-right: 27px; flex: none; }
```
